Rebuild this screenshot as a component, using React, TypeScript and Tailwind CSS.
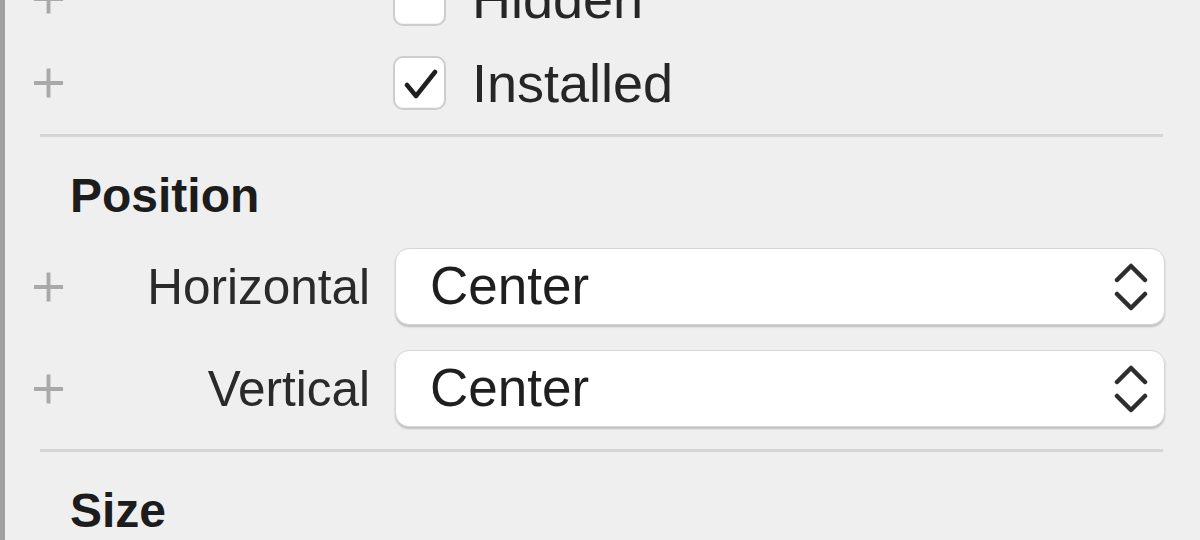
import React from 'react';

function Plus() {
    return (
        <svg width="32" height="32" viewBox="0 0 32 32" className="block">
            <path d="M16 1 V31 M1 16 H31" stroke="#a9a9a9" strokeWidth="4" fill="none" />
        </svg>
    );
}

function Checkbox({ checked }: { checked?: boolean }) {
    return (
        <div className="w-[53px] h-[54px] rounded-[10px] bg-white border-2 border-[#cdcdcd] shadow-[inset_0_-1px_1px_rgba(0,0,0,0.06)] flex items-center justify-center">
            {checked && (
                <svg width="36" height="34" viewBox="0 0 36 34" className="block mt-[2px]">
                    <path d="M5 18 L14 29 L33 5" stroke="#1f1f1f" strokeWidth="4.5" fill="none" strokeLinecap="round" strokeLinejoin="round" />
                </svg>
            )}
        </div>
    );
}

function Stepper() {
    return (
        <svg width="34" height="50" viewBox="0 0 34 50" className="block">
            <path d="M3 18 L17 4 L31 18 M3 32 L17 46 L31 32" stroke="#2d2d2d" strokeWidth="4.5" fill="none" strokeLinecap="round" strokeLinejoin="round" />
        </svg>
    );
}

function CheckRow({ label, checked }: { label: string; checked?: boolean }) {
    return (
        <div className="h-[84px] flex items-center">
            <div className="w-[60px] pl-[29px] flex items-center">
                <Plus />
            </div>
            <div className="w-[329px]" />
            <Checkbox checked={checked} />
            <span className="ml-[26px] text-[54px] leading-[60px] text-[#262626]">{label}</span>
        </div>
    );
}

function PopupRow({ label, value }: { label: string; value: string }) {
    return (
        <div className="h-[77px] flex items-center">
            <div className="w-[60px] pl-[29px] flex items-center">
                <Plus />
            </div>
            <div className="w-[306px] text-right text-[49.5px] leading-[56px] text-[#2a2a2a]">{label}</div>
            <div className="ml-[25px] w-[770px] h-[77px] rounded-[14px] bg-white border border-[#d6d6d6] shadow-[0_2px_2px_rgba(0,0,0,0.2)] flex items-center justify-between pl-[34px] pr-[16px]">
                <span className="text-[53px] leading-[77px] text-[#1f1f1f] -mt-[2px]">{value}</span>
                <Stepper />
            </div>
        </div>
    );
}

function Separator() {
    return <div className="ml-[36px] w-[1123px] h-[3px] bg-[#d5d5d5]" />;
}

function Header({ title }: { title: string }) {
    return <div className="ml-[66px] text-[48px] leading-[56px] font-bold text-[#1c1c1c]">{title}</div>;
}

export default function App() {
    return (
        <div className="w-[1200px] h-[540px] overflow-hidden bg-[#efefef] border-l-[5px] border-[#a0a0a0] font-['Liberation_Sans',Arial,sans-serif]">
            <div className="-mt-[43px] -ml-[1px] flex flex-col">
                <CheckRow label="Hidden" />
                <CheckRow label="Installed" checked />
                <div className="mt-[9px]">
                    <Separator />
                </div>
                <div className="mt-[31px]">
                    <Header title="Position" />
                </div>
                <div className="mt-[24px] flex flex-col gap-[25px]">
                    <PopupRow label="Horizontal" value="Center" />
                    <PopupRow label="Vertical" value="Center" />
                </div>
                <div className="mt-[22px]">
                    <Separator />
                </div>
                <div className="mt-[31px]">
                    <Header title="Size" />
                </div>
            </div>
        </div>
    );
}
